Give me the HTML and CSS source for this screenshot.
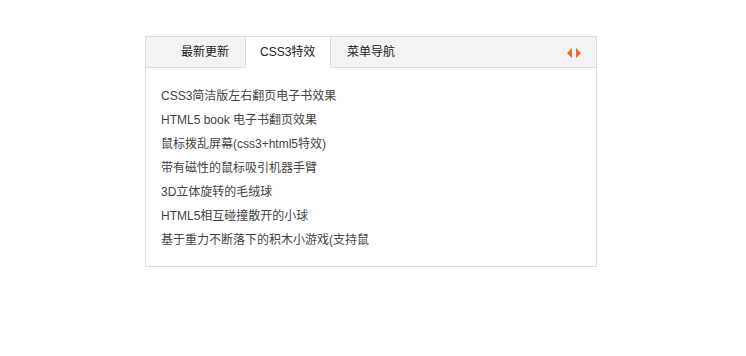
FILE: index.html
```html
<!DOCTYPE html>
<html lang="zh-CN">
<head>
<meta charset="utf-8">
<title>Tabs</title>
<link rel="stylesheet" href="styles.css">
</head>
<body>
<div class="box">
  <div class="box-head">
    <ul class="tabs">
      <li class="tab">最新更新</li>
      <li class="tab active">CSS3特效</li>
      <li class="tab">菜单导航</li>
    </ul>
    <div class="arrows">
      <span class="arrow arrow-left"></span>
      <span class="arrow arrow-right"></span>
    </div>
  </div>
  <ul class="list">
    <li>CSS3简洁版左右翻页电子书效果</li>
    <li>HTML5 book 电子书翻页效果</li>
    <li>鼠标拨乱屏幕(css3+html5特效)</li>
    <li>带有磁性的鼠标吸引机器手臂</li>
    <li>3D立体旋转的毛绒球</li>
    <li>HTML5相互碰撞散开的小球</li>
    <li>基于重力不断落下的积木小游戏(支持鼠</li>
  </ul>
</div>
</body>
</html>
```
FILE: styles.css
```css
html, body {
  margin: 0;
  padding: 0;
  background: #fff;
}
body {
  font-family: "Liberation Sans", Arial, "Noto Sans CJK SC", sans-serif;
  font-size: 12px;
  color: #333;
}
ul {
  list-style: none;
  margin: 0;
  padding: 0;
}
.box {
  margin: 36px 0 0 145px;
  width: 450px;
  border: 1px solid #ddd;
}
.box-head {
  display: flex;
  align-items: center;
  justify-content: space-between;
  height: 30px;
  background: #f3f3f3;
  border-bottom: 1px solid #ddd;
}
.tabs {
  display: flex;
  align-self: flex-start;
  margin-left: 19px;
}
.tab {
  height: 30px;
  line-height: 30px;
  padding: 0 16px;
  color: #222;
  font-size: 12px;
}
.tab.active {
  height: 31px;
  padding: 0 14px;
  width: 56px;
  background: #fff;
  border-left: 1px solid #ddd;
  border-right: 1px solid #ddd;
}
.arrows {
  display: flex;
  gap: 4px;
  margin-right: 15px;
  margin-top: 2px;
}
.arrow {
  width: 0;
  height: 0;
  border-top: 5px solid transparent;
  border-bottom: 5px solid transparent;
}
.arrow-left {
  border-right: 5px solid #f26a1b;
}
.arrow-right {
  border-left: 5px solid #f26a1b;
}
.list {
  padding: 16px 0 14px 15px;
}
.list li {
  height: 24px;
  line-height: 24px;
  white-space: nowrap;
  color: #444;
}
```
